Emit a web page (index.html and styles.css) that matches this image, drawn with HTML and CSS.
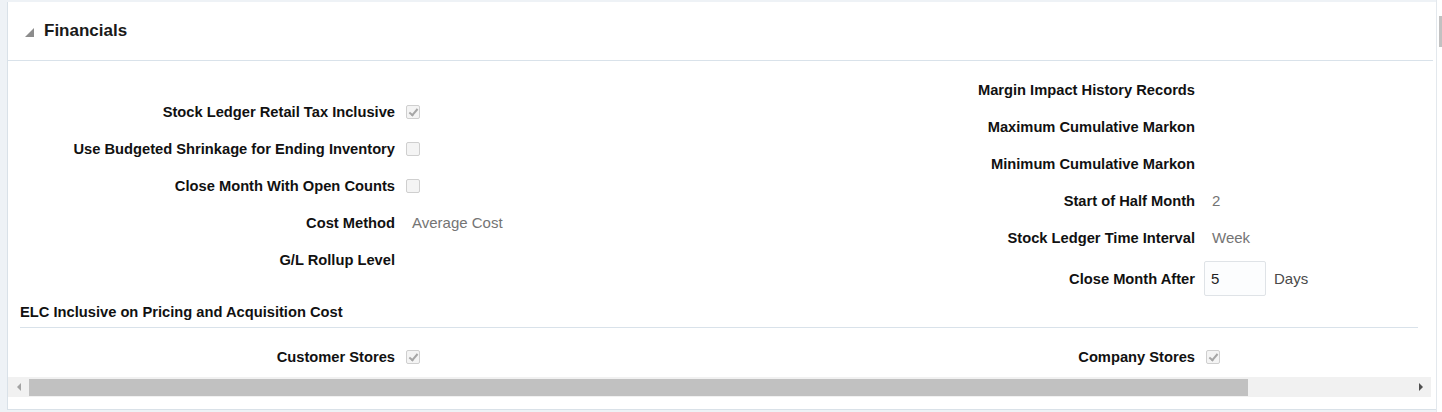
FILE: index.html
```html
<!DOCTYPE html>
<html lang="en">
<head>
    <meta charset="UTF-8">
    <title>Financials</title>
    <link rel="stylesheet" href="styles.css">
</head>
<body>

<div class="window">
    <div class="frame">
        <div class="panel">
            <div class="panel-body">
                <div class="panel-head">
                    <span class="disclosure"></span>
                    <h2>Financials</h2>
                </div>

                <div class="form">
                    <div class="col col-left">
                        <div class="row">
                            <label>Stock Ledger Retail Tax Inclusive</label>
                            <div class="field"><span class="check checked"></span></div>
                        </div>
                        <div class="row">
                            <label>Use Budgeted Shrinkage for Ending Inventory</label>
                            <div class="field"><span class="check"></span></div>
                        </div>
                        <div class="row">
                            <label>Close Month With Open Counts</label>
                            <div class="field"><span class="check"></span></div>
                        </div>
                        <div class="row">
                            <label>Cost Method</label>
                            <div class="field"><span class="value">Average Cost</span></div>
                        </div>
                        <div class="row">
                            <label>G/L Rollup Level</label>
                            <div class="field"></div>
                        </div>
                    </div>
                    <div class="col col-right">
                        <div class="row">
                            <label>Margin Impact History Records</label>
                            <div class="field"></div>
                        </div>
                        <div class="row">
                            <label>Maximum Cumulative Markon</label>
                            <div class="field"></div>
                        </div>
                        <div class="row">
                            <label>Minimum Cumulative Markon</label>
                            <div class="field"></div>
                        </div>
                        <div class="row">
                            <label>Start of Half Month</label>
                            <div class="field"><span class="value">2</span></div>
                        </div>
                        <div class="row">
                            <label>Stock Ledger Time Interval</label>
                            <div class="field"><span class="value">Week</span></div>
                        </div>
                        <div class="row row-input">
                            <label>Close Month After</label>
                            <div class="field">
                                <input class="text-input" type="text" value="5">
                                <span class="unit">Days</span>
                            </div>
                        </div>
                    </div>
                </div>

                <div class="subhead">ELC Inclusive on Pricing and Acquisition Cost</div>

                <div class="form">
                    <div class="col">
                        <div class="row">
                            <label>Customer Stores</label>
                            <div class="field"><span class="check checked"></span></div>
                        </div>
                    </div>
                    <div class="col col-right">
                        <div class="row">
                            <label>Company Stores</label>
                            <div class="field"><span class="check checked"></span></div>
                        </div>
                    </div>
                </div>
            </div>

            <div class="hscroll">
                <span class="arrow arrow-left"></span>
                <div class="track"><div class="thumb"></div></div>
                <span class="arrow arrow-right"></span>
            </div>
        </div>
    </div>
    <div class="vscroll"><div class="vthumb"></div></div>
</div>

</body>
</html>
```

FILE: styles.css
```css
body {
    margin: 0;
    font-family: "Liberation Sans", Arial, sans-serif;
    color: #000;
    background: #fff;
}

.window {
    display: flex;
    height: 412px;
    overflow: hidden;
}

.frame {
    flex: 1;
    padding: 2px 0 2px 7px;
    background: #eef2f6;
}

.panel {
    height: 100%;
    box-sizing: border-box;
    background: #fff;
    border-left: 1px solid #d9e1e8;
    border-bottom: 1px solid #d9e1e8;
    display: flex;
    flex-direction: column;
}

.panel-body {
    height: 375px;
    overflow: hidden;
}

.panel-head {
    display: flex;
    align-items: center;
    height: 58px;
    margin-right: 3px;
    padding-left: 17px;
    border-bottom: 1px solid #d9e2ea;
}

.disclosure {
    width: 0;
    height: 0;
    border-left: 9px solid transparent;
    border-bottom: 9px solid #8c8c8c;
    margin-right: 10px;
    margin-top: 3px;
}

.panel-head h2 {
    margin: 0;
    font-size: 17px;
    font-weight: bold;
    color: #1a1a1a;
}

.form {
    display: flex;
    padding-top: 10px;
}

.col {
    width: 800px;
}

.col-left {
    margin-top: 22px;
}

.col-right {
    width: 620px;
}

.row {
    display: grid;
    grid-template-columns: 387px auto;
    column-gap: 11px;
    align-items: center;
    height: 37px;
}

.row-input {
    height: 45px;
}

.row label {
    text-align: right;
    font-size: 14.7px;
    font-weight: bold;
    color: #111;
    white-space: nowrap;
}

.field {
    display: flex;
    align-items: center;
}

.value {
    padding-left: 6px;
    font-size: 15px;
    color: #747474;
}

.check {
    width: 12px;
    height: 12px;
    border: 1px solid #cfcfcf;
    border-radius: 2px;
    background: #f4f4f4;
    position: relative;
}

.check.checked::after {
    content: "";
    position: absolute;
    left: 4px;
    top: 1px;
    width: 3px;
    height: 7px;
    border-right: 2px solid #a6a6a6;
    border-bottom: 2px solid #a6a6a6;
    transform: rotate(40deg);
}

.text-input {
    width: 62px;
    height: 35px;
    box-sizing: border-box;
    margin-left: -2px;
    padding: 0 0 0 6px;
    border: 1px solid #dfe3e7;
    border-radius: 2px;
    background: #fcfdfe;
    font-family: "Liberation Sans", Arial, sans-serif;
    font-size: 15px;
    color: #222;
}

.unit {
    margin-left: 8px;
    font-size: 15px;
    color: #4a4a4a;
}

.subhead {
    margin: 0 18px 0 12px;
    padding: 1px 0 5px;
    line-height: 20px;
    font-size: 14.7px;
    font-weight: bold;
    color: #111;
    border-bottom: 1px solid #d9e2ea;
}

.hscroll {
    display: flex;
    height: 20px;
    margin-right: 5px;
    background: #f1f1f1;
}

.arrow {
    width: 21px;
    display: flex;
    align-items: center;
    justify-content: center;
}

.arrow::before {
    content: "";
    width: 0;
    height: 0;
    border-top: 4px solid transparent;
    border-bottom: 4px solid transparent;
}

.arrow-left::before {
    border-right: 4px solid #a3a3a3;
}

.arrow-right::before {
    border-left: 4px solid #505050;
}

.track {
    flex: 1;
    display: flex;
    align-items: center;
}

.thumb {
    width: 1219px;
    height: 17px;
    background: #c1c1c1;
}

.vscroll {
    width: 5px;
    border-left: 1px solid #e3e8ed;
    background: #fff;
}

.vthumb {
    margin: 16px 0 0 2px;
    width: 3px;
    height: 31px;
    background: #c1c1c1;
}
```
